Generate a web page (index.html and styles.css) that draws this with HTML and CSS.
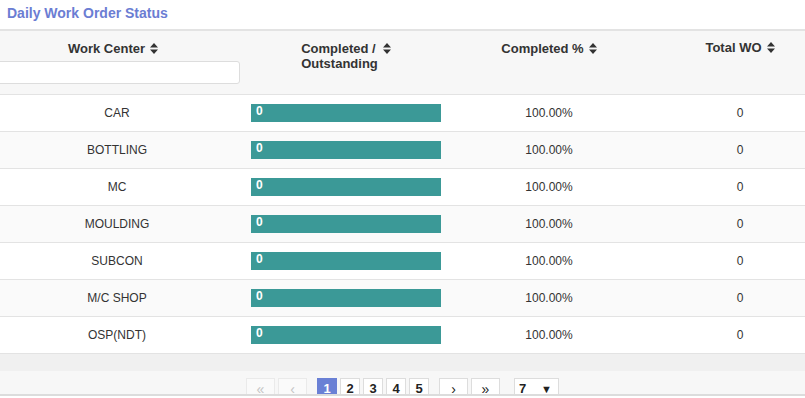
FILE: index.html
```html
<!DOCTYPE html>
<html lang="en">
<head>
  <meta charset="UTF-8">
  <meta name="viewport" content="width=device-width, initial-scale=1.0">
  <title>Daily Work Order Status</title>
  <link rel="stylesheet" href="styles.css">
</head>
<body>
  <h1 class="title">Daily Work Order Status</h1>

  <div class="table-wrap">
    <table class="wo-table">
      <colgroup>
        <col class="col-center">
        <col class="col-bar">
        <col class="col-pct">
        <col class="col-total">
      </colgroup>
      <thead>
        <tr>
          <th>
            <div class="th-label">
              <span>Work Center</span>
              <svg class="sort" width="8" height="11" viewBox="0 0 8 11"><path d="M0 4.5L4 0L8 4.5Z M0 6.5L4 11L8 6.5Z"/></svg>
            </div>
            <input class="filter" type="text">
          </th>
          <th>
            <div class="th-label">
              <span>Completed /<br>Outstanding</span>
              <svg class="sort" width="8" height="11" viewBox="0 0 8 11"><path d="M0 4.5L4 0L8 4.5Z M0 6.5L4 11L8 6.5Z"/></svg>
            </div>
          </th>
          <th>
            <div class="th-label">
              <span>Completed %</span>
              <svg class="sort" width="8" height="11" viewBox="0 0 8 11"><path d="M0 4.5L4 0L8 4.5Z M0 6.5L4 11L8 6.5Z"/></svg>
            </div>
          </th>
          <th>
            <div class="th-label th-up">
              <span>Total WO</span>
              <svg class="sort" width="8" height="11" viewBox="0 0 8 11"><path d="M0 4.5L4 0L8 4.5Z M0 6.5L4 11L8 6.5Z"/></svg>
            </div>
          </th>
        </tr>
      </thead>
      <tbody>
        <tr><td>CAR</td><td><div class="bar">0</div></td><td>100.00%</td><td>0</td></tr>
        <tr><td>BOTTLING</td><td><div class="bar">0</div></td><td>100.00%</td><td>0</td></tr>
        <tr><td>MC</td><td><div class="bar">0</div></td><td>100.00%</td><td>0</td></tr>
        <tr><td>MOULDING</td><td><div class="bar">0</div></td><td>100.00%</td><td>0</td></tr>
        <tr><td>SUBCON</td><td><div class="bar">0</div></td><td>100.00%</td><td>0</td></tr>
        <tr><td>M/C SHOP</td><td><div class="bar">0</div></td><td>100.00%</td><td>0</td></tr>
        <tr><td>OSP(NDT)</td><td><div class="bar">0</div></td><td>100.00%</td><td>0</td></tr>
      </tbody>
    </table>
  </div>

  <div class="table-foot"></div>

  <div class="pager">
    <div class="pager-group">
      <span class="pg-btn pg-wide disabled">&laquo;</span>
      <span class="pg-btn pg-wide disabled">&lsaquo;</span>
    </div>
    <div class="pager-group">
      <span class="pg-btn active">1</span>
      <span class="pg-btn">2</span>
      <span class="pg-btn">3</span>
      <span class="pg-btn">4</span>
      <span class="pg-btn">5</span>
    </div>
    <div class="pager-group">
      <span class="pg-btn pg-wide">&rsaquo;</span>
      <span class="pg-btn pg-wide">&raquo;</span>
    </div>
    <div class="pg-size">
      <span>7</span>
      <span class="caret">&#9660;</span>
    </div>
  </div>
</body>
</html>
```

FILE: styles.css
```css
body {
  margin: 0;
  font-family: "Liberation Sans", Arial, sans-serif;
  color: #333;
  background: #fff;
  overflow: hidden;
}
.title {
  margin: 0;
  padding: 4px 7px 7px;
  font-size: 14px;
  line-height: 18px;
  font-weight: bold;
  color: #6b7dd3;
  border-bottom: 2px solid #e3e3e3;
}
.table-wrap {
  overflow: hidden;
}
.wo-table {
  table-layout: fixed;
  border-collapse: collapse;
  width: 848px;
  margin-left: -20px;
}
.col-center { width: 266px; }
.col-bar { width: 200px; }
.col-pct { width: 206px; }
.col-total { width: 176px; }

.wo-table th {
  background: #f7f7f7;
  vertical-align: top;
  padding: 10px 6px 10px;
  font-size: 13px;
  line-height: 15px;
  font-weight: bold;
  color: #333;
  border-bottom: 1px solid #e3e3e3;
}
.th-label {
  display: flex;
  justify-content: center;
  align-items: flex-start;
  gap: 5px;
}
.th-label span {
  text-align: left;
}
.th-up {
  margin-top: -1px;
}
.sort {
  fill: #333;
  margin-top: 2px;
  flex: none;
}
.filter {
  display: block;
  box-sizing: border-box;
  width: 100%;
  height: 23px;
  margin-top: 5px;
  border: 1px solid #ddd;
  border-radius: 3px;
  background: #fff;
}
.wo-table td {
  height: 36px;
  padding: 0;
  text-align: center;
  vertical-align: middle;
  font-size: 12px;
  color: #333;
  border-bottom: 1px solid #e3e3e3;
}
.wo-table td:first-child {
  padding-left: 8px;
}
.wo-table tbody tr:nth-child(even) td {
  background: #fafafa;
}
.bar {
  width: 190px;
  height: 18px;
  margin: 0 auto;
  box-sizing: border-box;
  padding-left: 5px;
  background: #3b9997;
  color: #fff;
  font-weight: bold;
  font-size: 12px;
  line-height: 15px;
  text-align: left;
}
.table-foot {
  height: 17px;
  background: #f0f0f0;
}
.pager {
  height: 25px;
  overflow: hidden;
  box-sizing: border-box;
  padding-top: 7px;
  background: #f7f7f7;
  border-bottom: 2px solid #dcdcdc;
  display: flex;
  justify-content: center;
  gap: 10px;
}
.pager-group {
  display: flex;
  gap: 3px;
}
.pg-btn {
  box-sizing: border-box;
  width: 20px;
  height: 22px;
  border: 1px solid #ddd;
  background: #fff;
  font-size: 13px;
  font-weight: bold;
  line-height: 20px;
  text-align: center;
  color: #222;
}
.pg-wide {
  width: 29px;
  font-weight: normal;
  font-size: 14px;
}
.pg-btn.disabled {
  background: #fafafa;
  color: #c4c4c4;
  border-color: #eaeaea;
}
.pg-btn.active {
  background: #6a80d5;
  border-color: #6a80d5;
  color: #fff;
}
.pg-size {
  box-sizing: border-box;
  width: 45px;
  height: 22px;
  margin-left: 4px;
  padding: 0 6px 0 4px;
  border: 1px solid #ddd;
  background: #fff;
  display: flex;
  justify-content: space-between;
  font-size: 13px;
  font-weight: bold;
  line-height: 20px;
  color: #222;
}
.caret {
  font-size: 11px;
  font-weight: normal;
}
```
